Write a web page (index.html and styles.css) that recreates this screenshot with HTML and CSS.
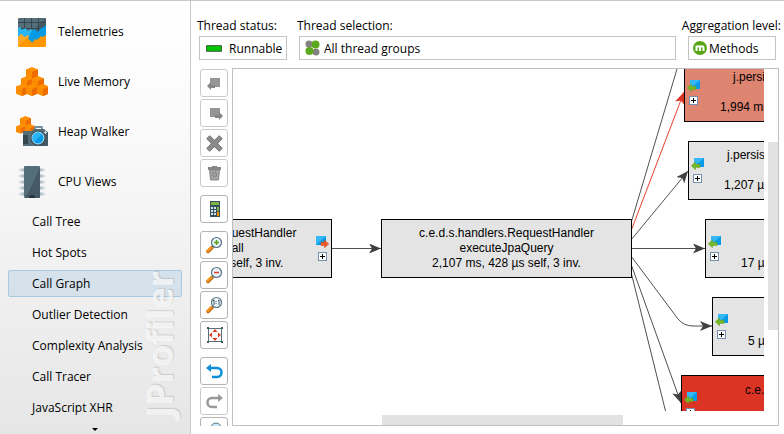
FILE: index.html
```
<!DOCTYPE html>
<html lang="en">
<head>
<meta charset="utf-8">
<title>JProfiler</title>
<link rel="stylesheet" href="styles.css">
</head>
<body>
<svg class="defs" aria-hidden="true">
  <defs>
    <symbol id="incoming" viewBox="0 0 13 12">
      <path fill="#0a9be8" d="M3 0h10v9H3z"/><path fill="#35b8f8" d="M3 0h10L3 9z"/>
      <path fill="#76b82a" stroke="#5f9e1c" stroke-width=".5" d="M.3 7.8 4.5 4v2.2H9v3.2H4.5v2.3z"/>
    </symbol>
    <symbol id="outgoing" viewBox="0 0 13 12">
      <path fill="#0a9be8" d="M0 0h10v9H0z"/><path fill="#35b8f8" d="M0 0h10L0 9z"/>
      <path fill="#f15a29" stroke="#c9431a" stroke-width=".5" d="M12.7 8 8.5 4v2.3H5v3.2h3.5v2.2z"/>
    </symbol>
    <symbol id="cube" viewBox="0 0 12 12">
      <path fill="#ff9100" d="M0 2.5 6 0l6 2.500v7L6 12 0 9.500z"/>
      <path fill="#ef6c00" d="M6 5l6-2.500v7L6 12z"/>
      <path fill="#fb8c00" d="M0 2.500 6 5v7L0 9.500z"/>
    </symbol>
    <symbol id="lens" viewBox="0 0 18 18">
      <path stroke="#b9600b" stroke-width="3.500" stroke-linecap="round" d="M3 15.500 7 11.500"/>
      <path stroke="#f7941d" stroke-width="2.500" stroke-linecap="round" d="M2.700 15 6.500 11.200"/>
      <path stroke="#607d8b" stroke-width="1.500" d="m7 11 1.500-1.500"/>
      <circle cx="11.500" cy="6.500" r="5" fill="#eaf5fb" stroke="#587382" stroke-width="1.200"/>
    </symbol>
  </defs>
</svg>
<div class="app">
  <nav class="sidebar">
    <span class="brand" aria-hidden="true">JProfiler</span>
    <ul class="sections">
      <li><a class="section" href="#">
        <svg viewBox="0 0 32 32"><path fill="#ff9800" d="M2 2h28v28l-1 1H3l-1-1z"/><path fill="#ffa726" d="M2 18h14L2 30z"/><path fill="#546e7a" d="M3 2h26l1 1v14H2V3z"/><path fill="#455a64" d="M30 2v14H15z"/><path stroke="#37474f" d="M2 6.500h28M2 12.500h28M8.500 2v12M15.500 2v12M22.500 2v12"/><path fill="#29b6f6" d="m2 12 2-1 2 3 3-2 3 3 3-2 2 2 2-2v7l-3 4-2-1-2-4-3 2-4-3-3 3z"/><path fill="#039be5" d="m16 15 3-2 3 3 3-4 3-1 2-2v10l-3 2-2-1-4 4-2-1-3 4-2-3-2-1 2-4z"/></svg>
        Telemetries</a></li>
      <li><a class="section" href="#">
        <svg viewBox="0 0 32 32"><use href="#cube" x="10" y="1" width="12" height="12"/><use href="#cube" x="5" y="10" width="12" height="12"/><use href="#cube" x="16" y="10" width="12" height="12"/><use href="#cube" x="0" y="18" width="12" height="12"/><use href="#cube" x="10" y="18" width="12" height="12"/><use href="#cube" x="21" y="18" width="12" height="12"/></svg>
        Live Memory</a></li>
      <li><a class="section" href="#">
        <svg viewBox="0 0 32 32"><use href="#cube" x="4" y="0" width="11" height="11"/><use href="#cube" x="0" y="8" width="9" height="10"/><use href="#cube" x="9" y="8" width="10" height="10"/><path fill="#78909c" d="M18 14v-3l1-1h7l1 1v3h-2v-2h-5v2z"/><path fill="#546e7a" d="M7 15h9l2-2h10l2 2 2 1v14H7z"/><path fill="#455a64" d="M20 30 32 16v14z"/><path fill="#37474f" d="M7 19h5v9H7z"/><circle cx="22" cy="22" r="7.500" fill="#37474f"/><circle cx="22" cy="22" r="6.500" fill="#b3e5fc"/><circle cx="22" cy="22" r="5.500" fill="#0a9be8"/><path fill="#29b6f6" d="M26 18a5.500 5.500 0 0 0-8 8z"/><path stroke="#cfd8dc" d="M28 16.500h3M29.500 15v3"/></svg>
        Heap Walker</a></li>
      <li><a class="section" href="#">
        <svg viewBox="0 0 32 32"><path stroke="#b0bec5" stroke-width="3" d="M5 4h22M5 10h22M5 16h22M5 22h22M5 28h22"/><path stroke="#cfd8dc" stroke-width="2" d="M3 4h3M3 10h3M3 16h3M3 22h3M3 28h3M26 4h3M26 10h3M26 16h3M26 22h3M26 28h3"/><rect x="8" width="16" height="32" rx="1" fill="#546e7a"/><path fill="#455a64" d="M24 1v30l-1 1H9l6-11z"/><path fill="#263238" d="M13 32a3 3 0 0 1 6 0z"/></svg>
        CPU Views</a></li>
    </ul>
    <ul class="views">
      <li><a class="view" href="#">Call Tree</a></li>
      <li><a class="view" href="#">Hot Spots</a></li>
      <li><a class="view current" href="#" aria-current="page">Call Graph</a></li>
      <li><a class="view" href="#">Outlier Detection</a></li>
      <li><a class="view" href="#">Complexity Analysis</a></li>
      <li><a class="view" href="#">Call Tracer</a></li>
      <li><a class="view" href="#">JavaScript XHR</a></li>
    </ul>
    <button class="more" type="button" aria-label="Scroll down"><svg viewBox="0 0 6 3"><path d="M0 0h6L3 3z"/></svg></button>
  </nav>

  <main class="content">
    <form class="filters">
      <div class="field">
        <label for="status">Thread status:</label>
        <div class="picker">
          <svg viewBox="0 0 17 16"><path fill="#00c800" stroke="#3c503c" d="M.5 5.500h16v6H.5z"/></svg>
          <select id="status"><option>Runnable</option></select>
        </div>
      </div>
      <div class="field wide">
        <label for="threads">Thread selection:</label>
        <div class="picker tight">
          <svg viewBox="0 0 16 16"><circle cx="4" cy="4" r="3.500" fill="#828282"/><circle cx="11" cy="12" r="3.500" fill="#828282"/><circle cx="10.500" cy="4.500" r="4" fill="#5aa91c"/><circle cx="4.500" cy="11" r="4" fill="#5aa91c"/></svg>
          <select id="threads"><option>All thread groups</option></select>
        </div>
      </div>
      <div class="field last">
        <label for="level">Aggregation level:</label>
        <div class="picker tight">
          <svg viewBox="0 0 16 16"><circle cx="7" cy="8" r="7" fill="#58a618"/><path fill="none" stroke="#fff" stroke-width="2" d="M3.500 11V5.500M3.500 8c0-2.500 3.500-2.500 3.500 0v3M7 8c0-2.500 3.500-2.500 3.500 0v3"/></svg>
          <select id="level"><option>Methods</option></select>
        </div>
      </div>
    </form>

    <div class="workspace">
      <div class="toolbar">
        <div class="group">
          <button type="button" class="off" aria-label="Show callers"><svg viewBox="0 0 18 18"><path fill="#969696" d="M5 4h10v9H5z"/><path fill="#858585" d="m2 12 4-4v3h4v3H6v2z"/></svg></button>
          <button type="button" class="off" aria-label="Show callees"><svg viewBox="0 0 18 18"><path fill="#969696" d="M5 4h10v9H5z"/><path fill="#858585" d="m18 12-4-4v3h-4v3h4v2z"/></svg></button>
          <button type="button" class="off" aria-label="Hide node"><svg viewBox="0 0 18 18"><path stroke="#707070" stroke-width="5" d="m3 3 13 13M16 3 3 16"/><path stroke="#8b8b8b" stroke-width="3.500" d="m3 3 13 13M16 3 3 16"/></svg></button>
          <button type="button" class="off" aria-label="Remove all"><svg viewBox="0 0 18 18"><path fill="#868686" d="M3 3h4V2h5v1h4v3H3z"/><path fill="#a4a4a4" stroke="#888" d="M4.500 6h10l-1 10h-8z"/><circle cx="9.500" cy="10.500" r="2" fill="none" stroke="#808080"/></svg></button>
        </div>
        <div class="group">
          <button type="button" aria-label="Calculate"><svg viewBox="0 0 18 18"><path fill="#37505c" d="M5 1h10v16H5z"/><path fill="#7cb342" d="M6 2h8v3H6z"/><path fill="#cfe8f0" d="M6 7h2v2H6zM9 7h2v2H9zM6 10h2v2H6zM9 10h2v2H9zM6 13h2v2H6zM9 13h2v2H9z"/><path fill="#7cb342" d="M12 7h2v4h-2z"/><path fill="#ff9100" d="M12 12h2v4h-2z"/></svg></button>
        </div>
        <div class="group">
          <button type="button" aria-label="Zoom in"><svg viewBox="0 0 18 18"><use href="#lens" width="18" height="18"/><path stroke="#55a316" stroke-width="1.500" d="M9 6.500h5M11.500 4v5"/></svg></button>
          <button type="button" aria-label="Zoom out"><svg viewBox="0 0 18 18"><use href="#lens" width="18" height="18"/><path stroke="#e53922" stroke-width="1.500" d="M9 6.500h5"/></svg></button>
          <button type="button" aria-label="Actual size"><svg viewBox="0 0 18 18"><use href="#lens" width="18" height="18"/><path fill="none" stroke="#4c5a62" d="m8 5 1-1v5m2-4v1m0 1v1m2-3 1-1v5"/></svg></button>
          <button type="button" aria-label="Fit to window"><svg viewBox="0 0 18 18"><path fill="none" stroke="#546e7a" d="M3.500 2.500h13v13h-13z"/><path fill="#455a64" d="M2 1h2v2H2zM16 1h2v2h-2zM2 15h2v2H2zM16 15h2v2h-2z"/><path fill="#e53922" d="m10 3 2.500 3h-5zM10 15l2.500-3h-5zM4 9l3-2.500v5zM16 9l-3-2.500v5z"/></svg></button>
        </div>
        <div class="group">
          <button type="button" aria-label="Undo"><svg viewBox="0 0 18 18"><path fill="none" stroke="#0a8fd8" stroke-width="2.500" d="M4 6h8c6 0 6 9 0 9H7"/><path fill="#0a8fd8" d="m1 6 5-4v8z"/></svg></button>
          <button type="button" class="off" aria-label="Redo"><svg viewBox="0 0 18 18"><path fill="none" stroke="#999" stroke-width="2.500" d="M15 6H7c-6 0-6 9 0 9h5"/><path fill="#999" d="m18 6-5-4v8z"/></svg></button>
          <button type="button" aria-label="Find"><svg viewBox="0 0 18 18"><circle cx="11" cy="6" r="5" fill="#cdeafa" stroke="#587382"/></svg></button>
        </div>
      </div>

      <div class="graph">
        <div class="canvas">
          <svg class="edges">
            <defs>
              <marker id="tip" viewBox="0 0 12 10" refX="12" refY="5" markerWidth="12" markerHeight="10" markerUnits="userSpaceOnUse" orient="auto"><path fill="#404040" d="M0 0 12 5 0 10 3 5z"/></marker>
              <marker id="hot-tip" viewBox="0 0 12 10" refX="12" refY="5" markerWidth="12" markerHeight="10" markerUnits="userSpaceOnUse" orient="auto"><path fill="#dd3322" d="M0 0 12 5 0 10 3 5z"/></marker>
            </defs>
            <path d="M99 179.500h49" marker-end="url(#tip)"/>
            <path d="M398 154 444 0"/>
            <path class="hot" d="M398 162 451 23" marker-end="url(#hot-tip)"/>
            <path d="M398 171 455 102" marker-end="url(#tip)"/>
            <path d="M398 179.500h74" marker-end="url(#tip)"/>
            <path d="m398 187 47 63q6 7 15 7h19" marker-end="url(#tip)"/>
            <path d="m398 195 50 139" marker-end="url(#tip)"/>
            <path d="m398 203 35 141"/>
          </svg>
          <div class="node caller"><p>c.e.d.s.handlers.RequestHandler<br>makeJpaCall<br>2,107 ms, 428 µs self, 3 inv.</p><span class="tools"><svg><use href="#outgoing"/></svg><button type="button" aria-label="Expand"></button></span></div>
          <div class="node focus"><p>c.e.d.s.handlers.RequestHandler<br>executeJpaQuery<br>2,107 ms, 428 µs self, 3 inv.</p></div>
          <div class="node callee n1"><span class="tools"><svg><use href="#incoming"/></svg><button type="button" aria-label="Expand"></button></span><p>j.persistence<br><br>1,994 ms</p></div>
          <div class="node callee n2"><span class="tools"><svg><use href="#incoming"/></svg><button type="button" aria-label="Expand"></button></span><p>j.persistence<br><br>1,207 µs</p></div>
          <div class="node callee n3"><span class="tools"><svg><use href="#incoming"/></svg><button type="button" aria-label="Expand"></button></span><p><br><br>17 µs</p></div>
          <div class="node callee n4"><span class="tools"><svg><use href="#incoming"/></svg><button type="button" aria-label="Expand"></button></span><p><br><br>5 µs</p></div>
          <div class="node callee n5"><span class="tools"><svg><use href="#incoming"/></svg><button type="button" aria-label="Expand"></button></span><p>c.e.d.s</p></div>
        </div>
        <div class="vbar"><span></span></div>
        <div class="hbar"><span></span></div>
      </div>
    </div>
  </main>
</div>
</body>
</html>
```
FILE: styles.css
```
* { box-sizing: border-box; }
body { margin: 0; background: #fff; color: #000; font: 12px/16px "Open Sans", "Noto Sans", sans-serif; }
ul { list-style: none; margin: 0; padding: 0; }
a { color: inherit; text-decoration: none; }
svg { display: block; flex: none; fill: none; }
button { padding: 0; font: inherit; }
.defs { position: absolute; width: 0; height: 0; }
.app { display: grid; grid-template: minmax(0, 1fr) / 191px minmax(0, 1fr); height: 100vh; border-top: 1px solid #c8c8c8; overflow: hidden; }

.sidebar { position: relative; display: flex; flex-direction: column; gap: 1px; padding: 6px 8px 0; border-right: 1px solid #c8c8c8; background: linear-gradient(#fff 0%, #fbfbfb 25%, #e6e6e6 100%); overflow: hidden; }
.section { display: flex; align-items: center; gap: 10px; height: 50px; padding-left: 8px; }
.section svg { width: 32px; height: 32px; }
.views { display: grid; gap: 4px; }
.view { display: flex; align-items: center; height: 27px; padding-left: 23px; border: 1px solid transparent; border-radius: 2px; }
.current { background: #afcee466; border-color: #a9cae0; }
.more { align-self: center; margin-top: 6px; border: 0; background: none; }
.more svg { width: 6px; height: 3px; fill: #000; }
.brand { position: absolute; right: 10px; bottom: 16px; writing-mode: vertical-rl; transform: rotate(180deg); font-size: 36px; line-height: 40px; font-weight: 700; color: #fafafad0; text-shadow: 1px 1px 1px #00000020; pointer-events: none; }

.content { display: flex; flex-direction: column; gap: 8px; min-width: 0; padding: 17px 5px 8px 8px; }
.filters { display: flex; gap: 12px; padding-right: 3px; }
.field { flex: none; width: 88px; }
.wide { flex: 1; }
.field label { display: block; margin: 0 -8px 2px -2px; white-space: nowrap; }
.last label { display: flex; justify-content: flex-end; margin-right: -5px; }
.picker { display: flex; align-items: center; gap: 7px; height: 24px; padding-left: 6px; border: 1px solid #c4c4c4; background: #fff; }
.tight { gap: 3px; padding-left: 5px; }
.picker svg { width: 16px; height: 16px; }
.picker select { flex: 1; min-width: 0; appearance: none; border: 0; padding: 2px 0 0; background: none; color: inherit; font: inherit; outline: 0; }
.last .picker { gap: 0; padding-left: 4px; }

.workspace { flex: 1; display: flex; gap: 4px; min-height: 0; }
.toolbar { display: flex; flex-direction: column; gap: 8px; width: 29px; padding: 1px 0 0 1px; overflow: hidden; }
.group { display: grid; gap: 2px; }
.toolbar button { display: grid; place-items: center; width: 28px; height: 28px; border: 1px solid #b4b4b4; border-radius: 3px; background: #fff; }
.toolbar .off { border-color: #cacaca; }
.toolbar svg { width: 18px; height: 18px; }

.graph { flex: 1; display: grid; grid-template: minmax(0, 1fr) 14px / minmax(0, 1fr) 14px; min-width: 0; border: 1px solid #c0c0c0; }
.canvas { position: relative; overflow: hidden; font: 12px/15px "Liberation Sans", sans-serif; }
.edges { position: absolute; width: 100%; height: 100%; }
.edges > path { stroke: #505050; }
.edges > .hot { stroke: #e84030; }
.node { position: absolute; display: flex; align-items: center; height: 59px; border: 1px solid #000; background: #e4e4e4; white-space: nowrap; text-align: center; }
.node p { flex: 1; margin: 0; }
.caller { left: -152px; top: 150px; width: 251px; padding: 0 2px 0 20px; }
.focus { left: 148px; top: 150px; width: 251px; }
.callee { gap: 20px; padding-left: 2px; width: 180px; text-align: left; }
.n1 { left: 451px; top: -6px; background: #de8572; text-indent: 13px; }
.n2 { left: 455px; top: 72px; text-indent: 3px; }
.n3 { left: 472px; top: 150px; }
.n4 { left: 479px; top: 228px; }
.n5 { left: 448px; top: 306px; background: #dc3424; text-indent: 28px; }
.n5 p { align-self: start; padding-top: 7px; }
.tools { display: grid; justify-items: center; gap: 4px; flex: none; }
.tools svg { width: 13px; height: 12px; }
.tools button { width: 9px; height: 9px; border: 1px solid #7590ae; background: linear-gradient(#000, #000) center / 5px 1px no-repeat, linear-gradient(#000, #000) center / 1px 5px no-repeat, #fff; }
.vbar { padding: 73px 0 0 4px; }
.vbar span { display: block; height: 70%; background: #e2e2e2; }
.hbar { padding: 4px 0 0 28%; }
.hbar span { display: block; width: 63%; height: 10px; background: #e2e2e2; }
```
